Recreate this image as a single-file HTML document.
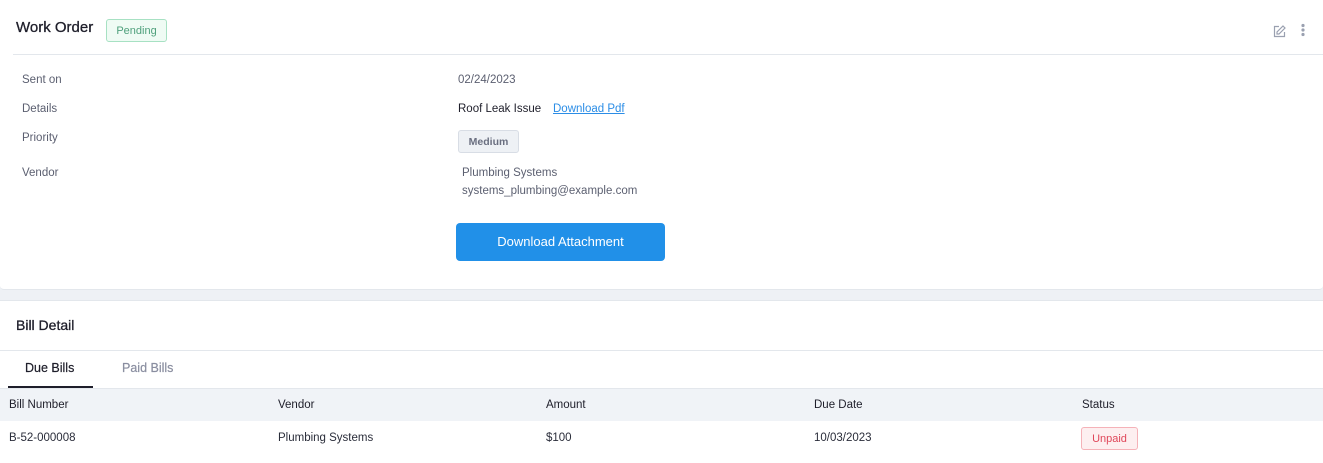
<!DOCTYPE html>
<html><head><style>
*{margin:0;padding:0;box-sizing:border-box}
body{width:1323px;height:463px;background:#eef1f5;font-family:"Liberation Sans",sans-serif;position:relative;overflow:hidden;color:#5b5f70}
.a{position:absolute;white-space:nowrap}
.card{position:absolute;background:#fff;left:0;width:1323px}
.lab{font-size:11.5px;color:#5b5f70;margin-top:1px}
</style></head><body>
<div class="card" style="top:0;height:290px;border-radius:0 0 4px 4px;border-bottom:1px solid #e3e7ec"></div>
<div class="card" style="top:300px;height:163px;border-top:1px solid #e3e7ec"></div>
<div class="a" style="left:16px;top:19px;font-size:15px;color:#1e1e2a;-webkit-text-stroke:0.3px #1e1e2a">Work Order</div>
<div class="a" style="left:106px;top:19px;width:61px;height:23px;border:1px solid #a7e1c3;background:#effbf4;border-radius:3px;color:#4fa07c;font-size:11px;text-align:center;line-height:22px">Pending</div>
<svg class="a" style="left:1273px;top:25px" width="13" height="13" viewBox="0 0 13 13" fill="none" stroke="#9aa0b0" stroke-width="1.2"><path d="M6 1.5H1.5v10h10V7"/><path d="M10 1l2 2-6 6H4V7z"/></svg>
<svg class="a" style="left:1300px;top:23px" width="6" height="14"><circle cx="3" cy="2.5" r="1.6" fill="#9aa0b0"/><circle cx="3" cy="7" r="1.6" fill="#9aa0b0"/><circle cx="3" cy="11.5" r="1.6" fill="#9aa0b0"/></svg>
<div class="a" style="left:13px;top:54px;width:1310px;height:1px;background:#e3e7ec"></div>
<div class="a lab" style="left:22px;top:73px">Sent on</div>
<div class="a lab" style="left:22px;top:102px">Details</div>
<div class="a lab" style="left:22px;top:131px">Priority</div>
<div class="a lab" style="left:22px;top:166px">Vendor</div>
<div class="a lab" style="left:458px;top:73px">02/24/2023</div>
<div class="a lab" style="left:458px;top:102px;color:#1e1e2a">Roof Leak Issue</div>
<div class="a lab" style="left:553px;top:102px;color:#2b8de6;text-decoration:underline">Download Pdf</div>
<div class="a" style="left:458px;top:130px;width:61px;height:23px;border:1px solid #d8dde5;background:#eef1f5;border-radius:3px;color:#6a6f80;font-size:10.5px;font-weight:bold;text-align:center;line-height:22px">Medium</div>
<div class="a lab" style="left:462px;top:166px">Plumbing Systems</div>
<div class="a lab" style="left:462px;top:184px">systems_plumbing@example.com</div>
<div class="a" style="left:456px;top:223px;width:209px;height:38px;background:#2190e8;border-radius:4px;color:#fff;font-size:13px;text-align:center;line-height:37px">Download Attachment</div>
<div class="a" style="left:16px;top:317px;font-size:14px;color:#1e1e2a;-webkit-text-stroke:0.3px #1e1e2a">Bill Detail</div>
<div class="a" style="left:0;top:350px;width:1323px;height:1px;background:#e3e7ec"></div>
<div class="a" style="left:25px;top:361px;font-size:12.5px;color:#1e1e2a;-webkit-text-stroke:0.2px #1e1e2a">Due Bills</div>
<div class="a" style="left:122px;top:361px;font-size:12.5px;color:#8a8ea0;-webkit-text-stroke:0.2px #8a8ea0">Paid Bills</div>
<div class="a" style="left:8px;top:386px;width:85px;height:2px;background:#1e1e2a"></div>
<div class="a" style="left:0;top:388px;width:1323px;height:33px;background:#f0f3f7;border-top:1px solid #e3e7ec"></div>
<div class="a lab" style="left:9px;top:398px;color:#1e1e2a">Bill Number</div>
<div class="a lab" style="left:278px;top:398px;color:#1e1e2a">Vendor</div>
<div class="a lab" style="left:546px;top:398px;color:#1e1e2a">Amount</div>
<div class="a lab" style="left:814px;top:398px;color:#1e1e2a">Due Date</div>
<div class="a lab" style="left:1082px;top:398px;color:#1e1e2a">Status</div>
<div class="a lab" style="left:9px;top:431px;color:#2a2d3a">B-52-000008</div>
<div class="a lab" style="left:278px;top:431px;color:#2a2d3a">Plumbing Systems</div>
<div class="a lab" style="left:546px;top:431px;color:#2a2d3a">$100</div>
<div class="a lab" style="left:814px;top:431px;color:#2a2d3a">10/03/2023</div>
<div class="a" style="left:1081px;top:427px;width:57px;height:23px;border:1px solid #f5b2b8;background:#fdeff0;border-radius:3px;color:#e0475a;font-size:11px;text-align:center;line-height:22px">Unpaid</div>
</body></html>
